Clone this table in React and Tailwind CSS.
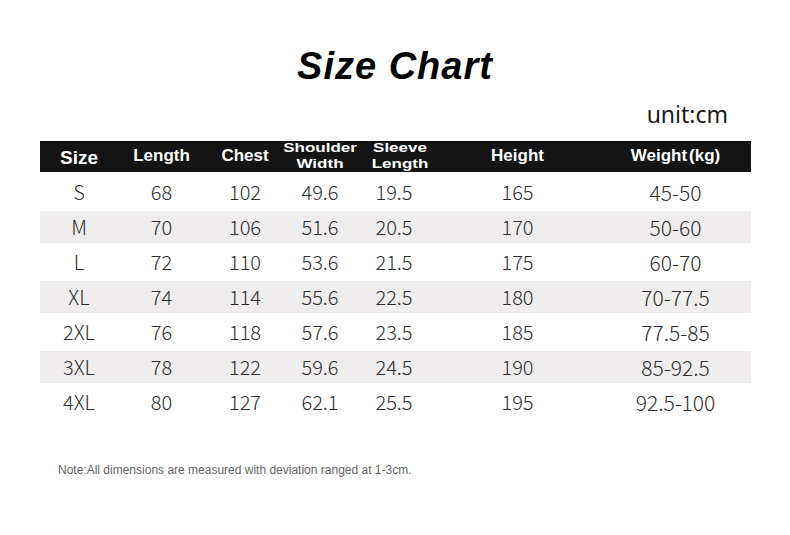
import React from 'react';

const cols = [
  { key: 'size', label: 'Size', w: 'w-[78px]' },
  { key: 'length', label: 'Length', w: 'w-[87px]' },
  { key: 'chest', label: 'Chest', w: 'w-[80px]' },
  { key: 'shoulder', label: ['Shoulder', 'Width'], w: 'w-[70px]' },
  { key: 'sleeve', label: ['Sleeve', 'Length'], w: 'w-[80px]' },
  { key: 'height', label: 'Height', w: 'w-[165px]' },
  { key: 'weight', label: 'Weight', w: 'w-[151px]' },
];

const rows = [
  ['S', '68', '102', '49.6', '19.5', '165', '45-50'],
  ['M', '70', '106', '51.6', '20.5', '170', '50-60'],
  ['L', '72', '110', '53.6', '21.5', '175', '60-70'],
  ['XL', '74', '114', '55.6', '22.5', '180', '70-77.5'],
  ['2XL', '76', '118', '57.6', '23.5', '185', '77.5-85'],
  ['3XL', '78', '122', '59.6', '24.5', '190', '85-92.5'],
  ['4XL', '80', '127', '62.1', '25.5', '195', '92.5-100'],
];

export default function App() {
  return (
    <div className="w-[790px] h-[535px] bg-white overflow-hidden">
      {/* Title */}
      <div className="pt-[44px] text-center">
        <h1 className="text-[38px] leading-[44px] font-bold italic tracking-[1px] text-black font-['Liberation_Sans',Arial,sans-serif]">
          Size Chart
        </h1>
      </div>

      {/* Unit */}
      <div className="mt-[13px] pr-[62px] text-right text-[23px] leading-[26px] text-[#1a1a1a] font-['Noto_Sans',sans-serif]">
        unit:cm
      </div>

      {/* Table */}
      <div className="mt-[14px] ml-[40px] w-[711px]">
        {/* Header */}
        <div className="flex h-[31px] bg-[#141414] text-white font-bold font-['Liberation_Sans',Arial,sans-serif]">
          {cols.map((c) => (
            <div
              key={c.key}
              className={`${c.w} flex items-center justify-center ${c.key === 'sleeve' ? 'pl-[10px]' : ''}`}
            >
              {Array.isArray(c.label) ? (
                <div className="flex flex-col items-center text-[17px] leading-[20px] scale-y-[0.77] mt-[-1px]">
                  <span>{c.label[0]}</span>
                  <span>{c.label[1]}</span>
                </div>
              ) : c.key === 'size' ? (
                <span className="text-[19px] mt-[3px]">{c.label}</span>
              ) : c.key === 'weight' ? (
                <span className="text-[17px] mt-[-2px]">
                  Weight<span className="ml-[2px]">(kg)</span>
                </span>
              ) : (
                <span className="text-[17px] mt-[-2px]">{c.label}</span>
              )}
            </div>
          ))}
        </div>

        {/* Body */}
        <div className="mt-[3px] font-['Noto_Sans_CJK_SC','Noto_Sans',sans-serif] text-[#2e2e2e] font-light">
          {rows.map((r, i) => (
            <div key={r[0]} className="h-[35px] pt-[1px]">
              <div className={`flex h-[32px] items-center ${i % 2 === 1 ? 'bg-[#efeded]' : ''}`}>
                {r.map((v, j) => (
                  <div
                    key={j}
                    className={`${cols[j].w} text-center ${j === 6 ? 'text-[21px]' : 'text-[20px]'} leading-[32px] ${j === 4 ? 'pr-[2px]' : ''}`}
                  >
                    {v}
                  </div>
                ))}
              </div>
            </div>
          ))}
        </div>
      </div>

      {/* Note */}
      <div className="mt-[42px] pl-[58px] text-[12px] leading-[16px] text-[#666] font-['Liberation_Sans',Arial,sans-serif]">
        Note:All dimensions are measured with deviation ranged at 1-3cm.
      </div>
    </div>
  );
}
